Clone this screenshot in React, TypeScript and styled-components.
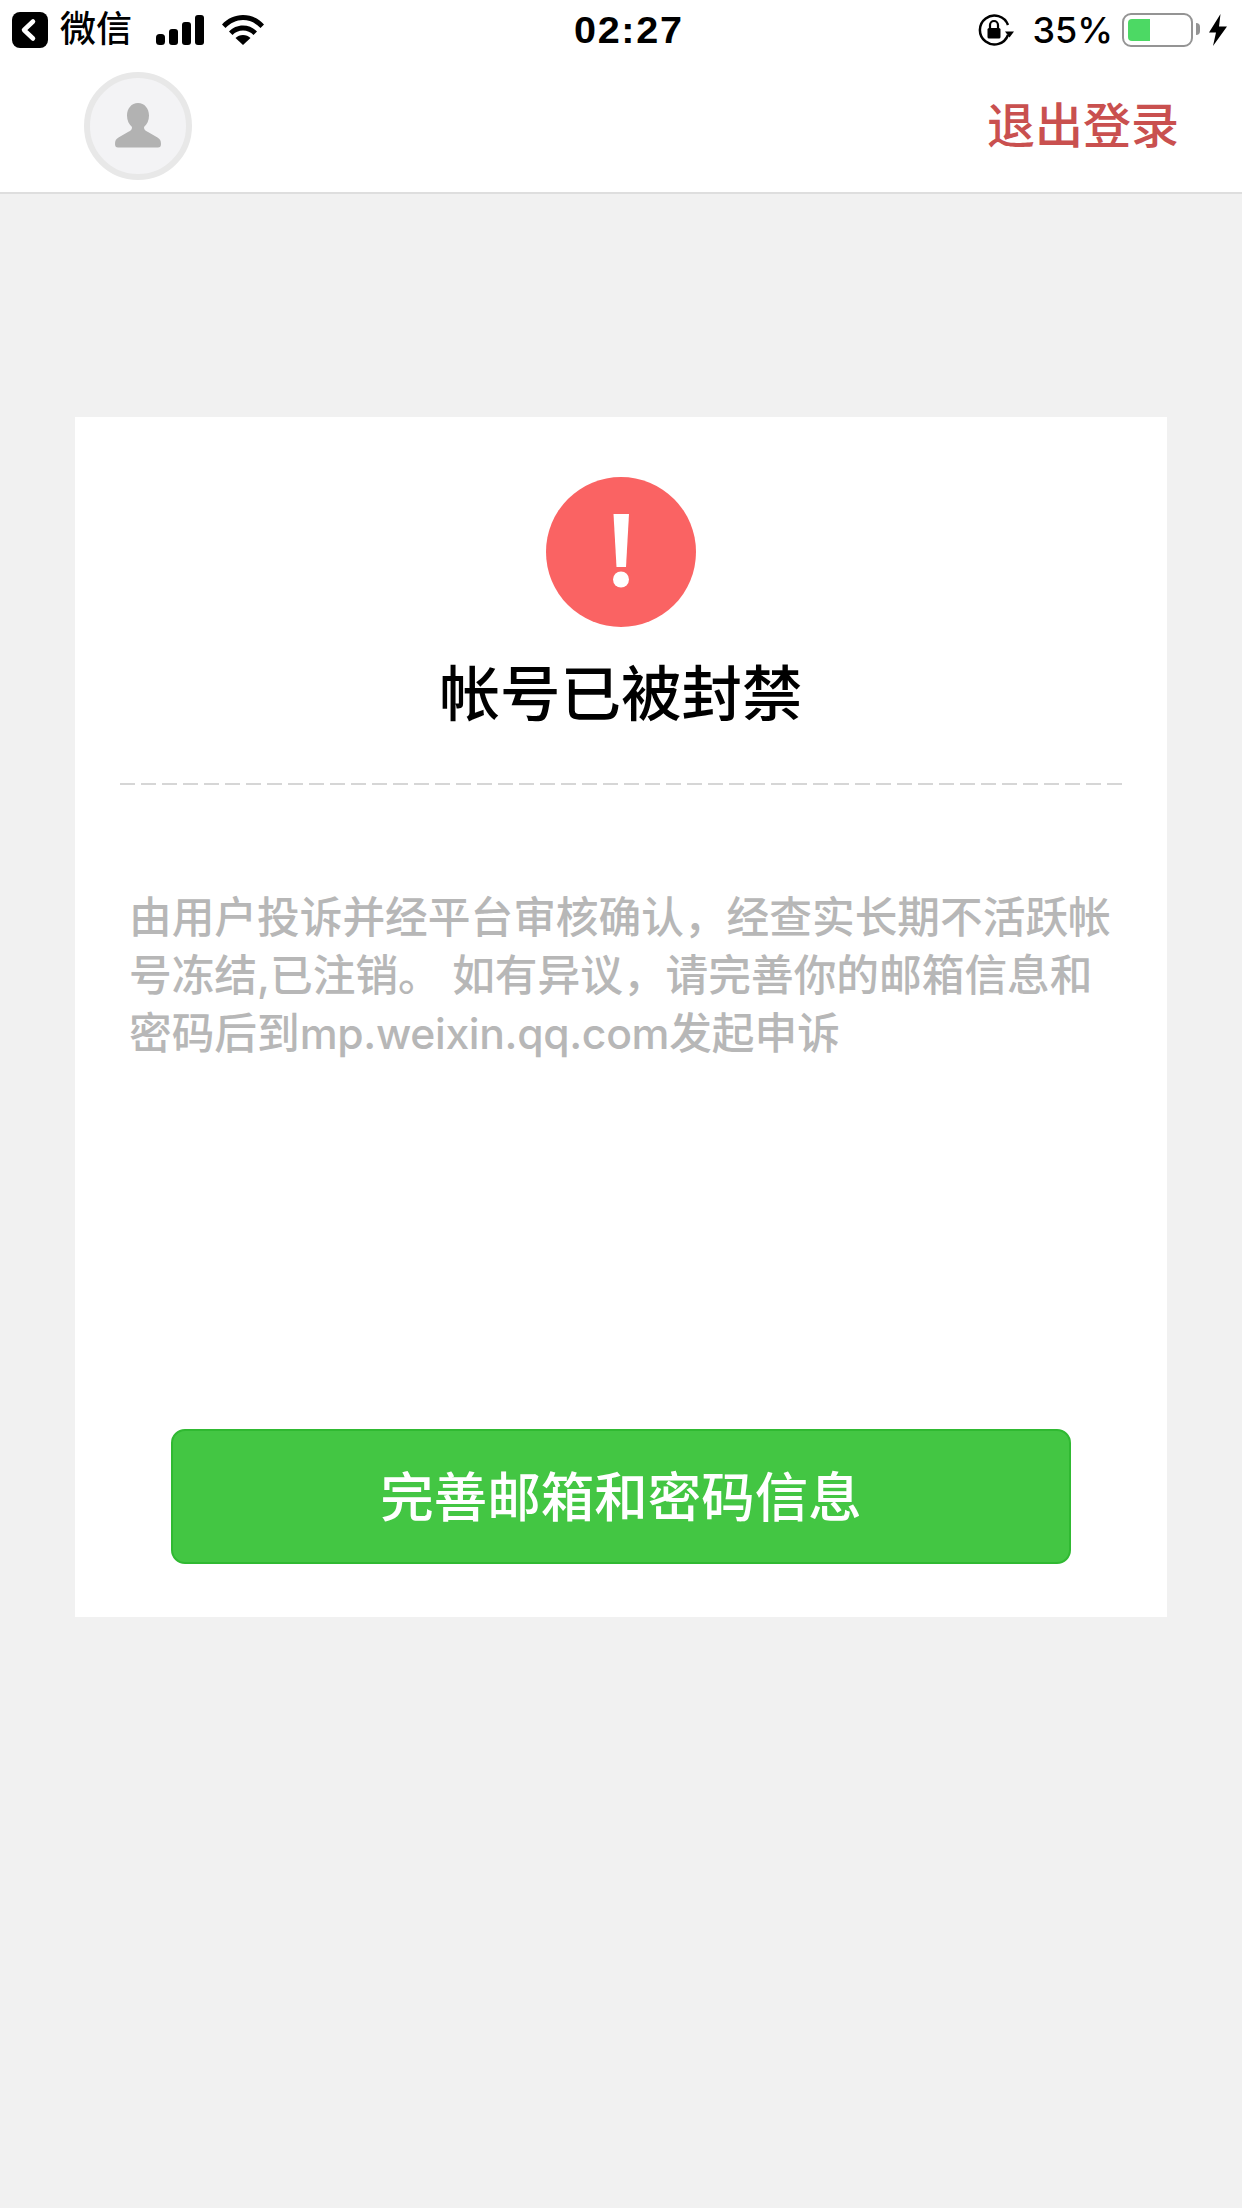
import React from 'react';
import styled, {createGlobalStyle} from 'styled-components';

const GlobalStyle = createGlobalStyle`
  html, body {
    margin: 0;
    padding: 0;
    background: #f1f1f1;
  }
  * {
    box-sizing: border-box;
  }
`;

const cjk = `"Liberation Sans", "Noto Sans CJK SC", sans-serif`;

const Page = styled.div`
  width: 1242px;
  height: 2208px;
  background: #f1f1f1;
  font-family: ${cjk};
  overflow: hidden;
`;

const StatusBar = styled.div`
  height: 60px;
  padding: 0 15px 0 12px;
  background: #fff;
  display: grid;
  grid-template-columns: 1fr auto 1fr;
  align-items: center;
  color: #000;
`;

const StatusLeft = styled.div`
  display: flex;
  align-items: center;
`;

const StatusRight = styled.div`
  display: flex;
  align-items: center;
  justify-content: flex-end;
`;

const BackLabel = styled.span`
  font-size: 36px;
  line-height: 40px;
  font-weight: 500;
  margin: 0 24px 0 12px;
`;

const Clock = styled.span`
  font-family: "Liberation Sans", sans-serif;
  font-size: 36px;
  line-height: 44px;
  font-weight: 700;
  letter-spacing: 1.5px;
  padding-top: 2px;
  transform: translateX(9px) scaleX(1.1);
`;

const Percent = styled.span`
  font-family: Inter, "Liberation Sans", sans-serif;
  font-size: 36px;
  line-height: 40px;
  font-weight: 500;
  margin: 0 9px 0 18px;
`;

const Battery = styled.div`
  width: 71px;
  height: 34px;
  padding: 4px;
  border: 2.5px solid #949494;
  border-radius: 9px;
  position: relative;
  &::after {
    content: '';
    position: absolute;
    right: -9px;
    top: 8px;
    width: 4px;
    height: 12px;
    background: #949494;
    border-radius: 0 4px 4px 0;
  }
`;

const BatteryFill = styled.div`
  width: 22px;
  height: 100%;
  background: #4cd964;
  border-radius: 4px 0 0 4px;
`;

const Header = styled.header`
  height: 134px;
  padding: 12px 63px 12px 84px;
  background: #fff;
  border-bottom: 2px solid #dedede;
  display: flex;
  align-items: flex-start;
  justify-content: space-between;
`;

const Avatar = styled.div`
  width: 108px;
  height: 108px;
  border-radius: 50%;
  border: 6px solid #e8e8e8;
  background: #f3f3f5;
  display: flex;
  align-items: center;
  justify-content: center;
`;

const Logout = styled.a`
  margin-top: 21px;
  font-size: 48px;
  line-height: 68px;
  font-weight: 500;
  color: #c9504f;
`;

const Card = styled.main`
  width: 1092px;
  height: 1200px;
  margin: 223px 0 0 75px;
  padding: 60px 45px 0;
  background: #fff;
  display: flex;
  flex-direction: column;
  align-items: center;
`;

const Title = styled.h1`
  margin: 28px 0 0;
  font-size: 60.5px;
  line-height: 80px;
  font-weight: 500;
  color: #000;
`;

const Divider = styled.div`
  align-self: stretch;
  height: 2px;
  margin-top: 48px;
  background: repeating-linear-gradient(to right, #d6d6d6 0 15px, transparent 15px 21px);
`;

const Notice = styled.p`
  align-self: stretch;
  margin: 104px 0 0;
  padding: 0 0 0 9px;
  font-family: Inter, "Noto Sans CJK SC", sans-serif;
  font-size: 42.7px;
  line-height: 58px;
  font-weight: 500;
  color: #b7b7b7;
  word-break: break-all;
`;

const Domain = styled.span`
  letter-spacing: -0.35px;
`;

const ActionButton = styled.button`
  width: 900px;
  height: 135px;
  margin-top: auto;
  margin-bottom: 53px;
  padding: 0 0 6px;
  border: 2px solid #30b932;
  border-radius: 14px;
  background: #43c643;
  color: #fff;
  font-family: inherit;
  font-size: 53.5px;
  font-weight: 500;
`;

function App() {
  return (
    <Page>
      <GlobalStyle/>
      <StatusBar>
        <StatusLeft>
          <svg width="36" height="36" viewBox="0 0 36 36">
            <rect width="36" height="36" rx="8" fill="#000"/>
            <path d="M21 9.5L12 18l9 8.5" fill="none" stroke="#fff" strokeWidth="4.5" strokeLinecap="round" strokeLinejoin="round"/>
          </svg>
          <BackLabel>微信</BackLabel>
          <svg width="48" height="30" viewBox="0 0 48 30">
            <rect x="0" y="19" width="9" height="11" rx="3.5" fill="#000"/>
            <rect x="13" y="14" width="9" height="16" rx="3" fill="#000"/>
            <rect x="26" y="7" width="9" height="23" rx="3" fill="#000"/>
            <rect x="39" y="0" width="9" height="30" rx="3" fill="#000"/>
          </svg>
          <svg width="42" height="30" viewBox="0 0 42 30" style={{marginLeft: 18}}>
            <path d="M0 9.5C5.5 3.5 13 0 21 0s15.500 3.500 21 9.500l-3.500 3.500C33.800 8 27.700 5 21 5S8.200 8 3.500 13z" fill="#000"/>
            <path d="M7 16.500C10.500 12.800 15.500 10.500 21 10.500s10.500 2.300 14 6l-3.500 3.500C28.800 17.200 25.100 15.500 21 15.500S13.200 17.200 10.500 20z" fill="#000"/>
            <path d="M13.500 23c2-2 4.600-3 7.500-3s5.500 1 7.500 3L21 30z" fill="#000"/>
          </svg>
        </StatusLeft>
        <Clock>02:27</Clock>
        <StatusRight>
          <svg width="36" height="32" viewBox="0 0 36 32">
            <path d="M30 21A14.500 14.500 0 1 1 30 11" fill="none" stroke="#000" strokeWidth="2.500"/>
            <path d="M27 17.500h9l-4.500 6z" fill="#000"/>
            <rect x="9.500" y="14" width="13" height="10.500" rx="1.500" fill="#000"/>
            <path d="M12 14v-3a4 4 0 0 1 8 0v3" fill="none" stroke="#000" strokeWidth="2.200"/>
          </svg>
          <Percent>35%</Percent>
          <Battery>
            <BatteryFill/>
          </Battery>
          <svg width="18" height="32" viewBox="0 0 18 32" style={{marginLeft: 16}}>
            <path d="M11.500 0L0 18.500h7L4 32l14-19.500h-8z" fill="#000"/>
          </svg>
        </StatusRight>
      </StatusBar>
      <Header>
        <Avatar>
          <svg width="46" height="46" viewBox="0 0 46 46">
            <path d="M23 0c6.500 0 11 5.500 11 12.500 0 5-2 9-5 11.500 0 2.500 1 3.500 4 5l9.500 5.500c2.500 1.500 3.500 3 3.500 6.500 0 2.500-1 3.500-3 3.500H3c-2 0-3-1-3-3.500 0-3.500 1-5 3.500-6.500L13 29c3-1.500 4-2.500 4-5-3-2.500-5-6.500-5-11.500C12 5.500 16.500 0 23 0z" fill="#b2b2b2"/>
          </svg>
        </Avatar>
        <Logout>退出登录</Logout>
      </Header>
      <Card>
        <svg width="150" height="150" viewBox="0 0 150 150">
          <circle cx="75" cy="75" r="75" fill="#fa6363"/>
          <path d="M67.500 37h15.500l-3 53h-9.500z" fill="#fff"/>
          <circle cx="75" cy="102.500" r="8" fill="#fff"/>
        </svg>
        <Title>帐号已被封禁</Title>
        <Divider/>
        <Notice>由用户投诉并经平台审核确认，经查实长期不活跃帐号冻结,已注销。 如有异议，请完善你的邮箱信息和密码后到<Domain>mp.weixin.qq.com</Domain>发起申诉</Notice>
        <ActionButton>完善邮箱和密码信息</ActionButton>
      </Card>
    </Page>
  );
}

export default App;
